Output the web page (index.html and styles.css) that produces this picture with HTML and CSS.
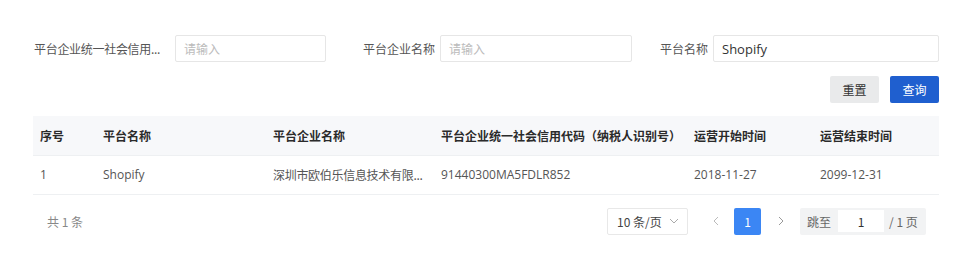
FILE: index.html
```html
<!DOCTYPE html>
<html lang="zh">
<head>
<meta charset="utf-8">
<link rel="stylesheet" href="styles.css">
</head>
<body>
<div class="page">
  <div class="form-row">
    <div class="field f1">
      <label class="lbl l1" title="平台企业统一社会信用代码">平台企业统一社会信用...</label>
      <div class="input i1"><span class="ph">请输入</span></div>
    </div>
    <div class="field f2">
      <label class="lbl l2">平台企业名称</label>
      <div class="input i2"><span class="ph">请输入</span></div>
    </div>
    <div class="field f3">
      <label class="lbl l3">平台名称</label>
      <div class="input i3"><span class="val">Shopify</span></div>
    </div>
  </div>
  <div class="actions">
    <button class="btn btn-reset">重置</button>
    <button class="btn btn-query">查询</button>
  </div>
  <table class="table">
    <thead>
      <tr>
        <th class="c1">序号</th>
        <th class="c2">平台名称</th>
        <th class="c3">平台企业名称</th>
        <th class="c4">平台企业统一社会信用代码（纳税人识别号）</th>
        <th class="c5">运营开始时间</th>
        <th class="c6">运营结束时间</th>
      </tr>
    </thead>
    <tbody>
      <tr>
        <td class="c1">1</td>
        <td class="c2">Shopify</td>
        <td class="c3" title="深圳市欧伯乐信息技术有限公司">深圳市欧伯乐信息技术有限...</td>
        <td class="c4">91440300MA5FDLR852</td>
        <td class="c5">2018-11-27</td>
        <td class="c6">2099-12-31</td>
      </tr>
    </tbody>
  </table>
  <div class="pager">
    <div class="total">共 1 条</div>
    <div class="pager-right">
      <div class="size-select">
        <span>10 条/页</span>
        <svg class="chev" width="10" height="6" viewBox="0 0 10 6"><path d="M1 1 L5 5 L9 1" fill="none" stroke="#aaa" stroke-width="1"/></svg>
      </div>
      <div class="nav">
        <svg class="arrow" width="6" height="10" viewBox="0 0 6 10"><path d="M5 1 L1 5 L5 9" fill="none" stroke="#bbb" stroke-width="1"/></svg>
        <span class="page-num">1</span>
        <svg class="arrow" width="6" height="10" viewBox="0 0 6 10"><path d="M1 1 L5 5 L1 9" fill="none" stroke="#999" stroke-width="1"/></svg>
      </div>
      <div class="jump">
        <span class="jl">跳至</span>
        <span class="jin">1</span>
        <span class="jr">/ 1 页</span>
      </div>
    </div>
  </div>
</div>
</body>
</html>
```

FILE: styles.css
```css
* { box-sizing: border-box; }
html, body { margin: 0; padding: 0; background: #fff; }
body {
  font-family: "Noto Sans CJK SC", "Noto Sans", sans-serif;
  font-size: 12px;
  color: #333;
}
.page {
  width: 971px;
  padding: 35px 32px 0 33px;
}
.form-row {
  display: flex;
  align-items: center;
  height: 27px;
}
.field { display: flex; align-items: center; }
.lbl {
  color: #555;
  white-space: nowrap;
  line-height: 27px;
}
.l1 { width: 134px; margin-left: 1px; letter-spacing: -0.3px; }
.l2 { width: 72px; margin-left: 37px; }
.l3 { width: 48px; margin-left: 28px; }
.input {
  height: 27px;
  border: 1px solid #e6e6e6;
  border-radius: 2px;
  display: flex;
  align-items: center;
  padding-left: 8px;
}
.i1 { width: 151px; margin-left: 7px; }
.i2 { width: 192px; margin-left: 5px; }
.i3 { width: 226px; margin-left: 5px; }
.ph { color: #bbb; }
.val { color: #333; font-family: "Open Sans", "Noto Sans", sans-serif; font-size: 13px; }
.actions {
  display: flex;
  justify-content: flex-end;
  gap: 11px;
  margin-top: 14px;
}
.btn {
  width: 49px;
  height: 27px;
  border: none;
  border-radius: 2px;
  font-family: inherit;
  font-size: 12px;
  padding: 0;
}
.btn-reset { background: #e9eaeb; color: #333; }
.btn-query { background: #1f5fcf; color: #fff; }
.table {
  margin-top: 13px;
  width: 906px;
  border-collapse: collapse;
  table-layout: fixed;
}
.table th, .table td {
  text-align: left;
  height: 39px;
  padding: 0 0 0 7px;
  border-bottom: 1px solid #eef0f2;
  white-space: nowrap;
}
.table th { background: #f7f8fa; font-weight: bold; color: #2b2b2b; }
.table td { color: #555; font-family: "Open Sans", "Noto Sans CJK SC", sans-serif; }
.table td.c3 { font-family: "Noto Sans CJK SC", sans-serif; letter-spacing: -0.3px; }
.c1 { width: 63px; }
.c2 { width: 170px; }
.c3 { width: 168px; }
.c4 { width: 253px; }
.c5 { width: 126px; }
.pager {
  display: flex;
  justify-content: space-between;
  align-items: center;
  margin-top: 13px;
  height: 27px;
  padding-right: 13px;
}
.total { color: #888; margin-left: 14px; }
.pager-right { display: flex; align-items: center; }
.size-select {
  width: 81px;
  height: 27px;
  border: 1px solid #e8e8e8;
  border-radius: 2px;
  display: flex;
  align-items: center;
  justify-content: space-between;
  padding: 0 8px 0 9px;
  color: #444;
}
.nav { display: flex; align-items: center; margin-left: 25px; }
.arrow { display: block; }
.page-num {
  width: 27px;
  height: 27px;
  margin: 0 17px 0 15px;
  background: #3b86f4;
  color: #fff;
  border-radius: 2px;
  display: flex;
  align-items: center;
  justify-content: center;
}
.jump {
  margin-left: 16px;
  width: 126px;
  height: 27px;
  background: #f2f3f4;
  border-radius: 2px;
  display: flex;
  align-items: center;
  color: #666;
  padding-left: 7px;
}
.jin {
  width: 46px;
  height: 22px;
  margin-left: 7px;
  background: #fff;
  display: flex;
  align-items: center;
  justify-content: center;
  color: #333;
}
.jr { margin-left: 5px; }
```
